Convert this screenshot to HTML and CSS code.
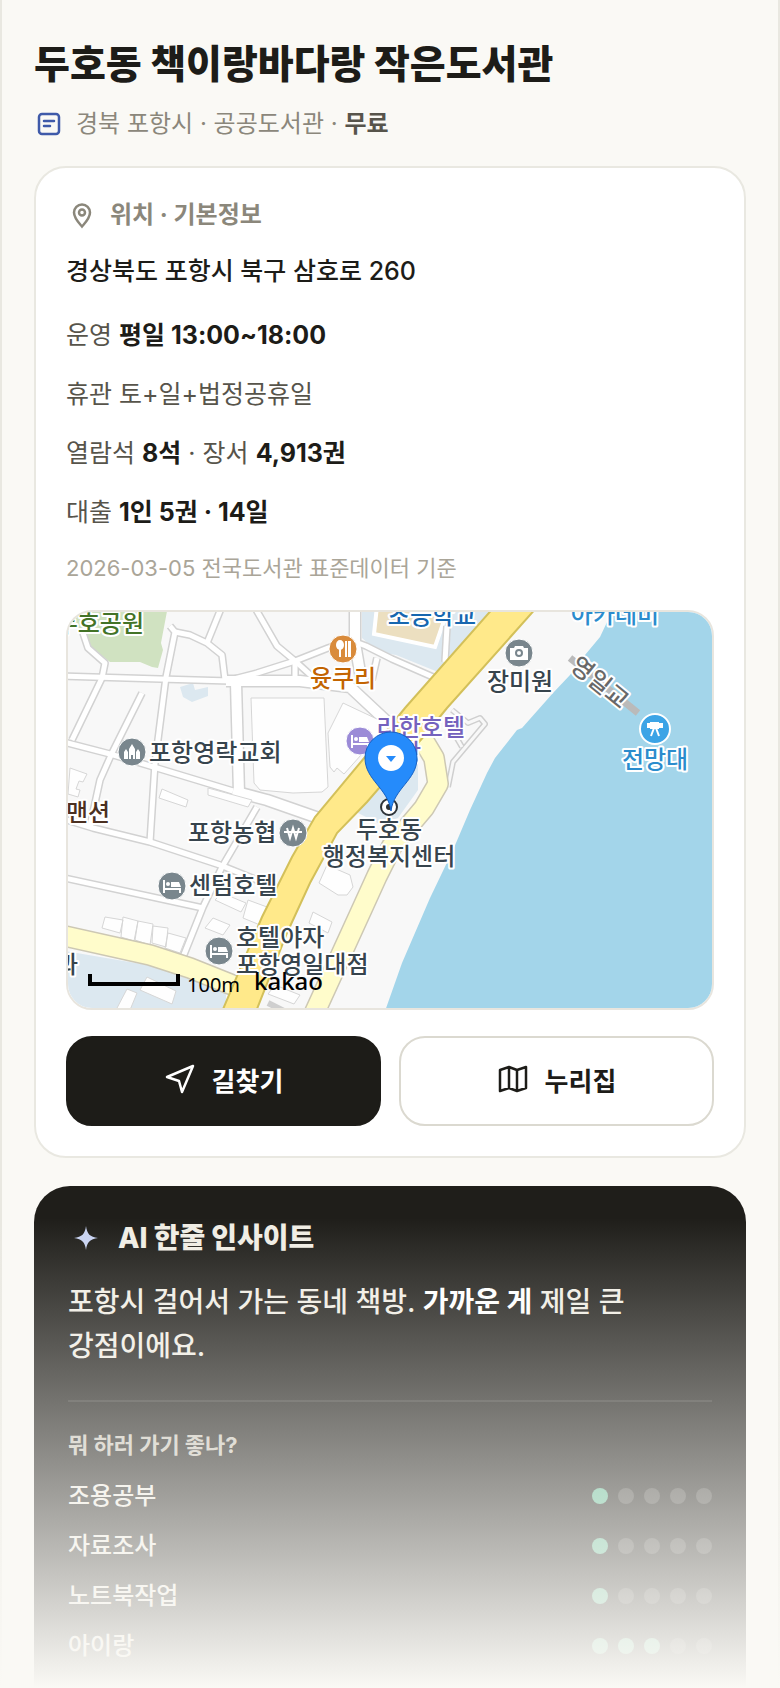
FILE: index.html
```html
<!DOCTYPE html>
<html lang="ko">
<head>
<meta charset="utf-8">
<meta name="viewport" content="width=device-width, initial-scale=1">
<title>두호동 책이랑바다랑 작은도서관</title>
<link rel="stylesheet" href="styles.css">
</head>
<body>
<main class="app">
  <header class="head">
    <h1 class="title">두호동 책이랑바다랑 작은도서관</h1>
    <p class="meta">
      <svg class="meta-icon" viewBox="0 0 28 28" aria-hidden="true"><rect x="5" y="4" width="20" height="20" rx="3"/><path d="M10 11h10M10 16h6"/></svg>
      <span>경북 포항시 · 공공도서관 · <strong class="free">무료</strong></span>
    </p>
  </header>

  <section class="card">
    <h2 class="card-title">
      <svg class="pin-icon" viewBox="0 0 28 28" aria-hidden="true"><path d="M14 25.500c-4-4.500-8-8.500-8-14a8 8 0 0 1 16 0c0 5.500-4 9.500-8 14z"/><circle cx="14" cy="11.500" r="3"/></svg>
      위치 · 기본정보
    </h2>
    <p class="address">경상북도 포항시 북구 삼호로 260</p>
    <ul class="facts">
      <li>운영 <b>평일 13:00~18:00</b></li>
      <li>휴관 토+일+법정공휴일</li>
      <li>열람석 <b>8석</b> · 장서 <b>4,913권</b></li>
      <li>대출 <b>1인 5권 · 14일</b></li>
    </ul>
    <p class="source">2026-03-05 전국도서관 표준데이터 기준</p>

    <div class="map">
      <svg class="map-svg" viewBox="68 612 644 396" preserveAspectRatio="xMidYMid slice" role="img" aria-label="두호동 주변 지도">
        <defs>
          <g id="lanes">
            <path d="M60 676 160 679 230 681 257 682 310 683 347 688"/>
            <path d="M170 626 175 632 166 677 155 763 150 842"/>
            <path d="M175 632 190 635 207 643 222 655 225 680"/>
            <path d="M222 606 207 643"/>
            <path d="M254 606 277 646 295 661 316 680"/>
            <path d="M230 680 257 673 295 661 328 648 350 640 366 646 392 659 433 677"/>
            <path d="M295 661V680"/>
            <path d="M83 633 88 648 105 663 102 678 72 740"/>
            <path d="M142 693 112 753 100 780 90 826"/>
            <path d="M60 741 110 754 157 768 233 791"/>
            <path d="M257 807 222 867 203 907 183 957"/>
            <path d="M60 818 93 828 150 842 220 865 262 882"/>
            <path d="M60 877 203 908"/>
            <path d="M377 658 372 680"/>
            <path d="M447 626 445 662"/>
          </g>
          <g id="streets">
            <path d="M355 606V643L362 684"/>
            <path d="M236 683 239 793"/>
            <path d="M233 791 267 800 330 822"/>
            <path d="M226 681 300 681 350 687 396 730"/>
          </g>
          <g id="bed"><path d="M-9-6h2v8H9v5H7V4H-7v3h-2z"/><path d="M-1-4h8l2 5H-1z"/><circle cx="-4" cy="-2" r="2"/></g>
        </defs>
        <rect x="60" y="600" width="660" height="420" class="land"/>
        <path class="park" d="M68 606H168L161 643 163 650 158 668 152 667 140 662H110L92 648 84 632 68 622z"/>
        <path class="civic" d="M362 606V638L378 652 396 655 438 672 452 655 496 606z"/>
        <path class="yard" d="M377 606H449L435 647 374 634z"/>
        <path class="civic" d="M180 687 193 683 195 690 208 687V696L192 702 183 697z"/>
        <path class="civic" d="M60 950 153 966 226 993V1014H60zM352 810 378 776 388 766 418 752V790L398 818 380 824z"/>
        <use href="#lanes" class="lane-edge"/>
        <use href="#streets" class="street-edge"/>
        <use href="#lanes" class="lane-fill"/>
        <use href="#streets" class="street-fill"/>
        <g class="building">
          <path d="M251 698H324L328 787 322 792 293 793 260 790 254 783z"/>
          <path d="M343 703 328 733 330 767 334 772 337 768 344 774 370 745 396 728z"/>
          <path d="M208 788 252 800 248 807 208 795zM162 789 188 800 186 807 159 798zM70 768 87 774 83 782 79 781 76 789 80 790 78 797 68 794z"/>
          <path d="M105 917 123 920 120 933 102 928zM123 917 138 921 134 941 121 937zM138 921 153 924 150 945 135 940zM153 926 168 928 166 947 152 943zM168 933 186 938 180 953 165 948z"/>
          <path d="M213 918 230 925 223 935 205 928zM222 893 246 903 241 912 215 900zM248 900 267 907 260 925 243 918zM313 912 332 922 328 933 309 923z"/>
          <path d="M327 865 350 875 353 887 347 895H338L319 883zM147 977 176 991 172 1004 140 990zM127 989 137 993 130 1010H116z"/>
          <path d="M275 985 300 995 294 1004 268 994z"/>
        </g>
        <path class="path-edge" d="M452 710 468 723 480 718 485 724 453 762 448 787M455 735 462 747"/>
        <path class="path-fill" d="M452 710 468 723 480 718 485 724 453 762 448 787M455 735 462 747"/>
        <path class="local-edge" d="M422 738 434 758 438 784 424 808 392 846 377 876 362 909 314 1014M60 935 150 955 190 968 250 992"/>
        <path class="local-fill" d="M422 738 434 758 438 784 424 808 392 846 377 876 362 909 314 1014M60 935 150 955 190 968 250 992"/>
        <path class="main-road" d="M495 606 405 708 365 757 315 817 292 857 262 917 221 1014H255L287 933 310 883 337 833 367 802 425 735 447 708 538 606z"/>
        <path class="path-edge" d="M268 1003 290 1014"/>
        <path class="sea" d="M611 606 608 620 600 637 585 655 570 675 553 693 522 728 517 730 495 758 487 773 470 810 453 850 430 898 402 963 384 1014H720V606z"/>
        <path class="bridge" d="M570 658 638 713"/>

        <g class="marks">
          <circle class="gray" cx="132" cy="752" r="14"/>
          <path class="white" d="M129 759V749l3-5 3 5v10h-2v-4h-2v4zM124 759v-7l2-3 2 3v7zM136 759v-7l2-3 2 3v7z"/>
          <circle class="orange" cx="343" cy="649" r="14"/>
          <ellipse class="white" cx="340" cy="645" rx="4" ry="5"/>
          <path class="white" d="M339 648h2v9h-2zM345 641h2v16h-2zM348 641h3v16h-3z"/>
          <circle class="gray" cx="519" cy="653" r="14"/>
          <path class="white" d="M510 648h4l1-2h8l1 2h4v12h-18z"/><circle class="gray-ring" cx="519" cy="653" r="3"/>
          <circle class="purple" cx="360" cy="741" r="14"/>
          <use class="white" href="#bed" transform="translate(360 741)"/>
          <circle class="gray" cx="293" cy="833" r="14"/>
          <path class="won" d="M287 828l3 10 3-10 3 10 3-10M284 832h18"/>
          <circle class="gray" cx="172" cy="886" r="14"/>
          <use class="white" href="#bed" transform="translate(172 886)"/>
          <circle class="gray" cx="219" cy="951" r="14"/>
          <use class="white" href="#bed" transform="translate(219 951)"/>
          <circle class="azure" cx="655" cy="729" r="15"/>
          <path class="white" d="M647 723h3v-1h9v1h4v5h-4v1h-9v-1h-3z"/><path class="tripod" d="M654 728l-3 8M656 728l3 8"/>
          <circle class="target" cx="389" cy="807" r="8"/>
          <circle class="target-dot" cx="389" cy="807" r="3"/>
        </g>

        <g class="labels">
          <text class="green" x="144" y="632" text-anchor="end">두호공원</text>
          <text class="brown" x="343" y="687" text-anchor="middle">윳쿠리</text>
          <text class="navy" x="432" y="624" text-anchor="middle">초등학교</text>
          <text x="520" y="690" text-anchor="middle">장미원</text>
          <text class="blue" x="615" y="623" text-anchor="middle">아카데미</text>
          <text class="blue" x="655" y="768" text-anchor="middle">전망대</text>
          <text class="road" x="600" y="691" text-anchor="middle" transform="rotate(39 600 682)">영일교</text>
          <text x="149" y="761">포항영락교회</text>
          <text class="violet" x="465" y="736" text-anchor="end">라한호텔</text>
          <text class="violet" x="421" y="761" text-anchor="end">포항</text>
          <text class="umber" x="66" y="821">맨션</text>
          <text x="188" y="841">포항농협</text>
          <text x="389" y="838" text-anchor="middle">두호동</text>
          <text x="389" y="865" text-anchor="middle">행정복지센터</text>
          <text x="189" y="894">센텀호텔</text>
          <text x="236" y="946">호텔야자</text>
          <text x="236" y="973">포항영일대점</text>
          <text x="78" y="973" text-anchor="end">과</text>
        </g>
        <path class="scale-bar" d="M90 974V984H178V974"/>
        <text class="scale-text" x="187" y="992">100m</text>
        <text class="brand" x="254" y="990">kakao</text>
        <path class="pin" d="M391 811C388 788 365 780 365 758a26 26 0 0 1 52 0C417 780 394 788 391 811z"/>
        <circle class="white" cx="391" cy="758" r="13"/>
        <path class="pin-arrow" d="M386 756h10l-5 6z"/>
      </svg>
    </div>

    <div class="actions">
      <button type="button" class="btn btn-dark">
        <svg class="btn-icon" viewBox="0 0 32 32" aria-hidden="true"><path d="M29 3 3 14l12 4 3 11z"/></svg>
        길찾기
      </button>
      <button type="button" class="btn btn-light">
        <svg class="btn-icon" viewBox="0 0 32 32" aria-hidden="true"><path d="M3 7l9-3 8 3 9-3v21l-9 3-8-3-9 3zM12 4v21M20 7v21"/></svg>
        누리집
      </button>
    </div>
  </section>

  <section class="insight">
    <h2 class="insight-title">
      <svg class="spark" viewBox="0 0 24 24" aria-hidden="true"><path d="M12 0c1 8 4 11 12 12-8 1-11 4-12 12-1-8-4-11-12-12 8-1 11-4 12-12z"/></svg>
      AI 한줄 인사이트
    </h2>
    <p class="insight-text">포항시 걸어서 가는 동네 책방. <b>가까운 게</b> 제일 큰 강점이에요.</p>
    <h3 class="insight-sub">뭐 하러 가기 좋나?</h3>
    <ul class="scores">
      <li><span>조용공부</span><span class="dots" role="img" aria-label="5점 중 1점"><i class="on"></i><i></i><i></i><i></i><i></i></span></li>
      <li><span>자료조사</span><span class="dots" role="img" aria-label="5점 중 1점"><i class="on"></i><i></i><i></i><i></i><i></i></span></li>
      <li><span>노트북작업</span><span class="dots" role="img" aria-label="5점 중 1점"><i class="on"></i><i></i><i></i><i></i><i></i></span></li>
      <li><span>아이랑</span><span class="dots" role="img" aria-label="5점 중 3점"><i class="on"></i><i class="on"></i><i class="on"></i><i></i><i></i></span></li>
    </ul>
  </section>
  <div class="fade"></div>
</main>
</body>
</html>
```
FILE: styles.css
```css
* { box-sizing: border-box; }
body {
  margin: 0;
  background: #faf9f5;
  color: #1d1c18;
  font-family: Inter, "Noto Sans CJK KR", sans-serif;
}
h1, h2, h3, p, ul { margin: 0; padding: 0; }
ul { list-style: none; }
svg { display: block; flex: none; }

.app {
  position: relative;
  display: flex;
  flex-direction: column;
  min-height: 100vh;
  padding: 38px 32px 0;
  border: solid #e9e8e1;
  border-width: 0 2px;
}

.title { font-size: 39px; font-weight: 800; line-height: 52px; }
.meta {
  display: flex;
  align-items: center;
  gap: 14px;
  margin-top: 16px;
  font-size: 24px;
  line-height: 36px;
  color: #8b877b;
}
.meta-icon { width: 28px; height: 28px; fill: none; stroke: #3f5aa9; stroke-width: 2.5; stroke-linecap: round; }
.free { font-weight: 600; color: #57544b; }

.card {
  margin-top: 24px;
  padding: 30px;
  border: 2px solid #e9e8e1;
  border-radius: 32px;
  background: #fff;
}
.card-title {
  display: flex;
  align-items: center;
  gap: 14px;
  padding-left: 2px;
  font-size: 24px;
  font-weight: 700;
  line-height: 34px;
  color: #8b877b;
}
.pin-icon { width: 28px; height: 28px; fill: none; stroke: #8b877b; stroke-width: 2.5; }
.address { margin-top: 20px; font-size: 25px; font-weight: 500; line-height: 38px; }
.facts { margin-top: 16px; font-size: 25px; color: #57544b; }
.facts li { padding: 10px 0; line-height: 39px; }
.facts b { font-weight: 700; color: #1d1c18; }
.source { margin-top: 10px; font-size: 22px; line-height: 32px; color: #aaa598; }

.map {
  height: 400px;
  margin-top: 26px;
  border: 2px solid #e8e5de;
  border-radius: 26px;
  overflow: hidden;
}
.map-svg { width: 100%; height: 100%; }

.land { fill: #f8f8f8; }
.park { fill: #d0e2c1; }
.civic { fill: #dce8f0; }
.yard { fill: #ecdfc0; stroke: #fff; stroke-width: 4; }
.sea { fill: #a3d5ea; }
.lane-edge, .lane-fill, .street-edge, .street-fill, .path-edge, .path-fill, .local-edge, .local-fill { fill: none; stroke-linejoin: round; }
.lane-edge { stroke: #d2d2d2; stroke-width: 8; }
.lane-fill { stroke: #fff; stroke-width: 5; }
.street-edge { stroke: #d2d2d2; stroke-width: 13; }
.street-fill { stroke: #fff; stroke-width: 10; }
.path-edge { stroke: #cfcfcf; stroke-width: 6; }
.path-fill { stroke: #f8f8f8; stroke-width: 3; }
.local-edge { stroke: #cdc8b4; stroke-width: 22; }
.local-fill { stroke: #fffccb; stroke-width: 19; }
.main-road { fill: #ffe98a; stroke: #d3c05a; stroke-width: 2; }
.building { fill: #fefefe; stroke: #d6d6d6; stroke-width: 1; }
.bridge { stroke: #bababa; stroke-width: 7; }

.marks circle { stroke: #fff; stroke-width: 1; }
.marks .gray { fill: #79868d; }
.marks .orange { fill: #d98b3b; }
.marks .purple { fill: #9b8bd7; }
.marks .azure { fill: #3ca4e6; stroke-width: 2; }
.marks .gray-ring { fill: none; stroke: #79868d; stroke-width: 2; }
.marks .target { fill: #fff; stroke: #2d3338; stroke-width: 2; }
.marks .target-dot { fill: #2d3338; stroke: none; }
.white { fill: #fff; }
.won, .tripod { fill: none; stroke: #fff; stroke-width: 2; }

.labels {
  font-family: "Noto Sans CJK KR", sans-serif;
  font-size: 24px;
  font-weight: 500;
  fill: #37444d;
  stroke: #fff;
  stroke-width: 4;
  stroke-linejoin: round;
  paint-order: stroke;
}
.green { fill: #437327; }
.brown { fill: #c36400; }
.navy { fill: #1767b0; }
.blue { fill: #2b8ccd; }
.violet { fill: #7562bd; }
.umber { fill: #4b3021; }
.road { fill: #686868; }
.scale-bar { fill: none; stroke: #000; stroke-width: 4; }
.scale-text { font-family: "Noto Sans", sans-serif; font-size: 20px; }
.brand { font-family: "Noto Sans", sans-serif; font-size: 24px; font-weight: 500; }
.pin { fill: #258bfb; stroke: #1561c4; stroke-width: 1; }
.pin-arrow { fill: #258bfb; }

.actions { display: grid; grid-template-columns: 1fr 1fr; gap: 18px; margin-top: 26px; }
.btn {
  display: flex;
  align-items: center;
  justify-content: center;
  gap: 16px;
  height: 90px;
  padding: 0 0 4px;
  border: 2px solid #dbd9d0;
  border-radius: 26px;
  font: inherit;
  font-size: 26px;
  font-weight: 700;
}
.btn-dark { border-color: #1d1c18; background: #1d1c18; color: #fff; }
.btn-light { background: #fff; color: #1d1c18; }
.btn-icon { width: 32px; height: 32px; fill: none; stroke: currentColor; stroke-width: 2.5; stroke-linejoin: round; }

.insight {
  flex: 1;
  margin-top: 28px;
  padding: 32px 34px 10px;
  border-radius: 36px 36px 0 0;
  background: #1f1e1a;
  color: #f0ede4;
}
.insight-title {
  display: flex;
  align-items: center;
  gap: 20px;
  padding-left: 6px;
  font-size: 28px;
  font-weight: 800;
  line-height: 40px;
}
.spark { width: 24px; height: 24px; fill: #c8d3f2; }
.insight-text { margin-top: 22px; font-size: 28px; font-weight: 500; line-height: 44px; word-break: keep-all; }
.insight-text b { font-weight: 700; color: #fff; }
.insight-sub {
  margin-top: 32px;
  padding-top: 26px;
  border-top: 2px solid #353430;
  font-size: 22px;
  font-weight: 700;
  line-height: 34px;
  color: #c9c5ba;
}
.scores { margin-top: 9px; font-size: 24px; font-weight: 500; line-height: 36px; }
.scores li { display: flex; align-items: center; justify-content: space-between; padding: 7px 0; }
.dots { display: flex; gap: 10px; }
.dots i { width: 16px; height: 16px; border-radius: 50%; background: #474642; }
.dots .on { background: #60ba94; }

.fade {
  position: absolute;
  right: -2px;
  bottom: 0;
  left: -2px;
  height: 470px;
  background: linear-gradient(rgba(250, 249, 245, 0), #faf9f5);
  pointer-events: none;
}
```
